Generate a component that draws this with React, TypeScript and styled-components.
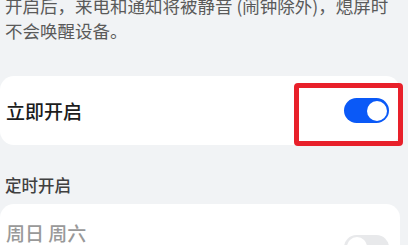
import styled, { createGlobalStyle } from "styled-components";

const Global = createGlobalStyle`
  html, body {
    margin: 0;
    padding: 0;
    background: #f1f3f5;
    overflow: hidden;
  }
  body {
    font-family: "Noto Sans CJK SC", "Noto Sans", sans-serif;
  }
`;

const Page = styled.div`
  width: 408px;
  height: 245px;
  overflow: hidden;
  background: #f1f3f5;
`;

const Description = styled.p`
  margin: -7px 0 0;
  padding: 0 4px 0 5px;
  font-size: 17.5px;
  line-height: 25px;
  color: #5a5a5a;
`;

const Card = styled.div`
  position: relative;
  width: 400px;
  box-sizing: border-box;
  background: #ffffff;
  border-radius: 14px;
  display: flex;
  align-items: center;
  justify-content: space-between;
  padding: 0 11px 0 6px;
`;

const NowCard = styled(Card)`
  margin-top: 33px;
  height: 69px;
`;

const TimerCard = styled(Card)`
  height: 86px;
`;

const Title = styled.span<{ muted?: boolean }>`
  font-size: 19px;
  line-height: 26px;
  font-weight: 500;
  color: ${(p) => (p.muted ? "#999999" : "#1c1c1c")};
`;

const Column = styled.div`
  display: flex;
  flex-direction: column;
  align-self: flex-start;
  padding-top: 16px;
`;

const SectionLabel = styled.div`
  height: 59px;
  box-sizing: border-box;
  padding: 20px 5px 0;
  display: flex;
  align-items: center;
  font-size: 16.5px;
  font-weight: 500;
  color: #404040;
`;

const Track = styled.div<{ on?: boolean }>`
  width: 45px;
  height: 25px;
  border-radius: 13px;
  background: ${(p) => (p.on ? "#0a59f7" : "#e8e9eb")};
  display: flex;
  align-items: center;
  justify-content: ${(p) => (p.on ? "flex-end" : "flex-start")};
  padding: 0 2.5px;
  box-sizing: border-box;
`;

const Knob = styled.div`
  width: 20px;
  height: 20px;
  border-radius: 50%;
  background: #ffffff;
`;

const Highlight = styled.div`
  position: absolute;
  right: -3px;
  top: 7px;
  width: 109px;
  height: 63px;
  box-sizing: border-box;
  border: 5px solid #e8202a;
  border-radius: 4px;
  pointer-events: none;
`;

const Toggle = ({ on }: { on?: boolean }) => (
  <Track on={on}>
    <Knob />
  </Track>
);

export default function App() {
  return (
    <Page>
      <Global />
      <Description>
        开启后，来电和通知将被静音 (闹钟除外)，熄屏时
        <br />
        不会唤醒设备。
      </Description>
      <NowCard>
        <Title>立即开启</Title>
        <Toggle on />
        <Highlight />
      </NowCard>
      <SectionLabel>定时开启</SectionLabel>
      <TimerCard>
        <Column>
          <Title muted>周日 周六</Title>
        </Column>
        <Toggle />
      </TimerCard>
    </Page>
  );
}
